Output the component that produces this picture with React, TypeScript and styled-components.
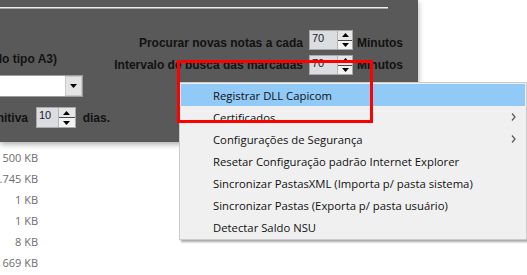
import React from 'react'
import styled, { createGlobalStyle } from 'styled-components'

const GlobalStyle = createGlobalStyle`
  html, body {
    margin: 0;
    padding: 0;
    background: #ffffff;
  }
  body {
    width: 527px;
    height: 275px;
    overflow: hidden;
  }
`

const Screen = styled.div`
  position: relative;
  width: 527px;
  height: 275px;
  overflow: hidden;
  background: #ffffff;
`

const FormPanel = styled.div`
  width: 418px;
  height: 142px;
  background: #595959;
  box-shadow: 0 2px 6px rgba(0, 0, 0, 0.35);
  display: flex;
  flex-direction: column;
  font-family: "Liberation Sans", Arial, sans-serif;
  font-weight: bold;
  font-size: 12px;
  color: #121212;
`

const Bevel = styled.div`
  margin-top: 7px;
  width: 388px;
  border-top: 1px solid #eeeeee;
  border-bottom: 1px solid #a4a4a4;
`

const FormBody = styled.div`
  display: grid;
  grid-template-columns: 110px 1fr;
  padding-right: 15px;
`

const LeftCol = styled.div`
  display: flex;
  flex-direction: column;
  padding-top: 43px;
`

const RightCol = styled.div`
  display: flex;
  flex-direction: column;
  align-items: flex-end;
  gap: 5px;
  padding-top: 21px;
`

const FieldRow = styled.div<{ $height: number }>`
  display: flex;
  align-items: center;
  height: ${(p) => p.$height}px;
`

const Label = styled.span<{ $shift?: number; $gap?: number }>`
  line-height: 14px;
  white-space: nowrap;
  margin-top: ${(p) => p.$shift ?? 0}px;
  margin-right: ${(p) => p.$gap ?? 0}px;
`

// labels whose start is cut off by the left edge of the window
const ClippedLabel = styled.div<{ $width: number; $gap?: number }>`
  width: ${(p) => p.$width}px;
  margin-right: ${(p) => p.$gap ?? 0}px;
  display: flex;
  justify-content: flex-end;
  white-space: nowrap;
  line-height: 14px;
`

const Spin = styled.div<{ $width: number; $height: number; $gap: number }>`
  width: ${(p) => p.$width}px;
  height: ${(p) => p.$height}px;
  margin-right: ${(p) => p.$gap}px;
  box-sizing: border-box;
  border: 1px solid #a9a9a9;
  background: #dcdde1;
  display: flex;
`

const SpinText = styled.div`
  flex: 1;
  padding: 1px 2px;
  font-family: "Liberation Sans", Arial, sans-serif;
  font-weight: normal;
  font-size: 11px;
  line-height: 13px;
  color: #1a1a30;
`

const SpinButtons = styled.div<{ $width: number }>`
  width: ${(p) => p.$width}px;
  border-left: 1px solid #b4b4b4;
  display: flex;
  flex-direction: column;
`

const SpinHalf = styled.div<{ $down?: boolean }>`
  flex: 1;
  display: flex;
  align-items: center;
  justify-content: center;
  background: ${(p) => (p.$down ? '#f2f2f2' : '#e6e6e6')};
  border-top: ${(p) => (p.$down ? '1px solid #4a4a4a' : 'none')};
`

const Combo = styled.div`
  margin-left: -20px;
  margin-top: 9px;
  width: 103px;
  height: 22px;
  box-sizing: border-box;
  border: 1px solid #9c9c9c;
  background: #ffffff;
  display: flex;
  justify-content: flex-end;
`

const ComboButton = styled.div`
  width: 17px;
  box-sizing: border-box;
  border: 1px solid #c9c9c9;
  background: #e4e4e4;
  display: flex;
  align-items: center;
  justify-content: center;
`

const SpinLine = styled(FieldRow)`
  margin-top: 10px;
`

const FileSizes = styled.div`
  width: 38px;
  margin-top: 5px;
  display: flex;
  flex-direction: column;
  align-items: flex-end;
  font-family: "Open Sans", "Noto Sans", sans-serif;
  font-size: 11px;
  line-height: 21px;
  color: #6d6d6d;
  white-space: nowrap;
`

const ContextMenu = styled.ul`
  position: absolute;
  left: 179px;
  top: 82px;
  width: 348px;
  box-sizing: border-box;
  margin: 0;
  padding: 1px;
  list-style: none;
  background: #f0f0f0;
  border: 1px solid #cccccc;
  box-shadow: 2px 2px 2px rgba(0, 0, 0, 0.35);
  font-family: "Open Sans", "Noto Sans", sans-serif;
  font-size: 11.3px;
  color: #111111;
`

const MenuItem = styled.li<{ $active?: boolean }>`
  height: 22px;
  padding: 0 9px 0 32px;
  display: flex;
  align-items: center;
  justify-content: space-between;
  white-space: nowrap;
  background: ${(p) => (p.$active ? '#91c9f7' : 'transparent')};
`

const Callout = styled.div`
  position: absolute;
  left: 177px;
  top: 60px;
  width: 196px;
  height: 63px;
  box-sizing: border-box;
  border: 3px solid #ff0000;
  pointer-events: none;
`

const Triangle = ({ down }: { down?: boolean }) => (
  <svg width="7" height="4" viewBox="0 0 7 4">
    <path d={down ? 'M0 0H7L3.5 4Z' : 'M0 4H7L3.5 0Z'} fill="#000" />
  </svg>
)

const Chevron = () => (
  <svg width="5" height="8" viewBox="0 0 5 8">
    <path d="M1 0.5L4 4L1 7.5" fill="none" stroke="#5c5c5c" strokeWidth="1.3" />
  </svg>
)

const SpinBox = ({ value, width, height, button, gap }: { value: string; width: number; height: number; button: number; gap: number }) => (
  <Spin $width={width} $height={height} $gap={gap}>
    <SpinText>{value}</SpinText>
    <SpinButtons $width={button}>
      <SpinHalf>
        <Triangle />
      </SpinHalf>
      <SpinHalf $down>
        <Triangle down />
      </SpinHalf>
    </SpinButtons>
  </Spin>
)

const menuItems = [
  { label: 'Registrar DLL Capicom', active: true },
  { label: 'Certificados', sub: true },
  { label: 'Configurações de Segurança', sub: true },
  { label: 'Resetar Configuração padrão Internet Explorer' },
  { label: 'Sincronizar PastasXML (Importa p/ pasta sistema)' },
  { label: 'Sincronizar Pastas (Exporta p/ pasta usuário)' },
  { label: 'Detectar Saldo NSU' },
]

const sizes = ['500 KB', '1.745 KB', '1 KB', '1 KB', '8 KB', '669 KB']

const App: React.FC = () => {
  return (
    <>
      <GlobalStyle />
      <Screen>
        <FormPanel>
          <Bevel />
          <FormBody>
            <LeftCol>
              <ClippedLabel $width={57}>Certificado (do tipo A3)</ClippedLabel>
              <Combo>
                <ComboButton>
                  <Triangle down />
                </ComboButton>
              </Combo>
              <SpinLine $height={21}>
                <ClippedLabel $width={28} $gap={8}>
                  Exclusão definitiva
                </ClippedLabel>
                <SpinBox value="10" width={61} height={21} button={16} gap={7} />
                <Label>dias.</Label>
              </SpinLine>
            </LeftCol>
            <RightCol>
              <FieldRow $height={20}>
                <Label $shift={6} $gap={6}>
                  Procurar novas notas a cada
                </Label>
                <SpinBox value="70" width={44} height={20} button={14} gap={4} />
                <Label $shift={6}>Minutos</Label>
              </FieldRow>
              <FieldRow $height={20}>
                <Label $gap={6}>Intervalo de busca das marcadas</Label>
                <SpinBox value="70" width={44} height={20} button={14} gap={4} />
                <Label>Minutos</Label>
              </FieldRow>
            </RightCol>
          </FormBody>
        </FormPanel>
        <FileSizes>
          {sizes.map((s, i) => (
            <div key={i}>{s}</div>
          ))}
        </FileSizes>
        <ContextMenu>
          {menuItems.map((item) => (
            <MenuItem key={item.label} $active={item.active}>
              <span>{item.label}</span>
              {item.sub && <Chevron />}
            </MenuItem>
          ))}
        </ContextMenu>
        <Callout />
      </Screen>
    </>
  )
}

export default App
